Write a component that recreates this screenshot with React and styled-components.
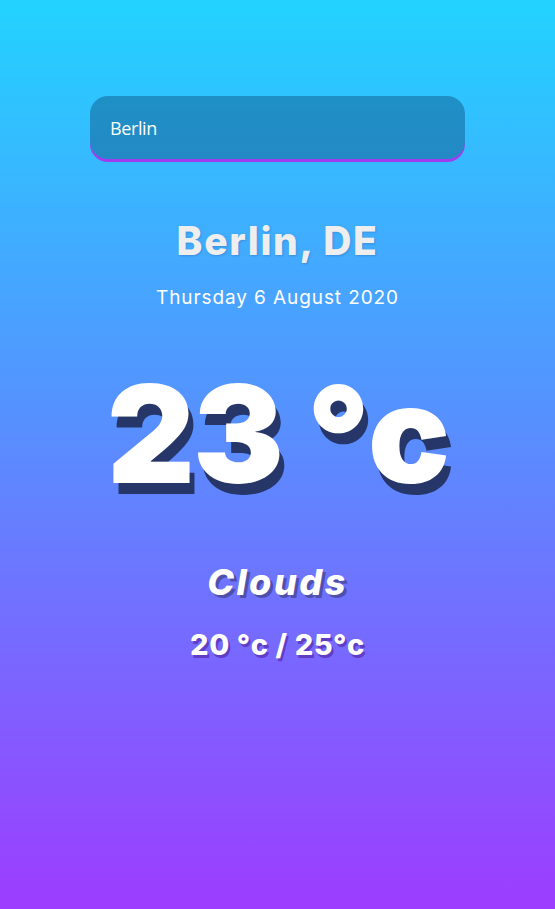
import React from "react";
import styled, { createGlobalStyle } from "styled-components";

const Global = createGlobalStyle`
  html, body { margin: 0; padding: 0; }
  body { font-family: "Inter", "Open Sans", sans-serif; }
`;

const Page = styled.main`
  min-height: 909px;
  background: linear-gradient(180deg, #22d3ff 0%, #5592ff 45%, #9d3cff 100%);
  display: flex;
  flex-direction: column;
  align-items: center;
  padding-top: 96px;
  box-sizing: border-box;
`;

const SearchBox = styled.div`
  width: 375px;
  height: 63px;
  border-radius: 18px;
  background: rgba(0, 40, 80, 0.33);
  box-shadow: 0 3px 0 #a03cf0;
  display: flex;
  align-items: center;
  padding: 0 20px;
  box-sizing: border-box;
`;

const SearchInput = styled.input`
  border: none;
  outline: none;
  background: transparent;
  color: #ffffff;
  font-family: "Open Sans", sans-serif;
  font-size: 18px;
  width: 100%;
  padding: 0;
  caret-color: #ffffff;
  letter-spacing: -0.4px;
`;

const Location = styled.h1`
  margin: 59px 0 0;
  font-size: 39px;
  font-weight: 800;
  color: #eeeeee;
  text-shadow: 1px 1px 2px rgba(40, 60, 120, 0.25);
  line-height: 1.2;
  letter-spacing: 1.6px;
`;

const DateLine = styled.div`
  margin-top: 21px;
  font-size: 19px;
  font-weight: 400;
  color: #ffffff;
  letter-spacing: 0.9px;
`;

const Temp = styled.div`
  margin-top: 50px;
  font-size: 136px;
  font-weight: 900;
  color: #ffffff;
  line-height: 1.1;
  letter-spacing: -2px;
  text-shadow: 5px 11px 0 rgba(38, 54, 104, 1);
`;

const Weather = styled.div`
  margin-top: 52px;
  font-size: 36px;
  font-weight: 800;
  font-style: italic;
  color: #ffffff;
  letter-spacing: 2.5px;
  text-shadow: 3px 3px 0 rgba(50, 50, 100, 0.55);
`;

const Range = styled.div`
  margin-top: 23px;
  font-size: 29px;
  font-weight: 800;
  color: #ffffff;
  letter-spacing: 0.6px;
  text-shadow: 2px 3px 0 rgba(90, 50, 180, 0.8);
`;

export default function App() {
  return (
    <>
      <Global />
      <Page>
        <SearchBox>
          <SearchInput defaultValue="Berlin" autoFocus placeholder="Search..." />
        </SearchBox>
        <Location>Berlin, DE</Location>
        <DateLine>Thursday 6 August 2020</DateLine>
        <Temp>23 °c</Temp>
        <Weather>Clouds</Weather>
        <Range>20 °c / 25°c</Range>
      </Page>
    </>
  );
}
